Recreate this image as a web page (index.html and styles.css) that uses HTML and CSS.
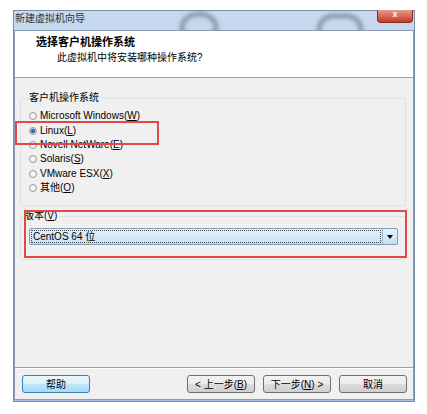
FILE: index.html
```html
<!DOCTYPE html>
<html lang="zh-CN">
<head>
  <meta charset="UTF-8" />
  <title>新建虚拟机向导</title>
  <link rel="stylesheet" href="styles.css">
</head>
<body>
  <div class="window">
    <div class="titlebar">
      <span class="title">新建虚拟机向导</span>
      <span class="blob blob-a"></span>
      <span class="blob blob-b"></span>
      <span class="close">x</span>
    </div>
    <div class="client">
      <div class="header">
        <div class="head-title">选择客户机操作系统</div>
        <div class="head-sub">此虚拟机中将安装哪种操作系统?</div>
      </div>

      <div class="body">
        <fieldset class="group">
          <legend>客户机操作系统</legend>
          <label class="radio"><span class="dot"></span>Microsoft Windows(<u>W</u>)</label>
          <label class="radio checked"><span class="dot"></span>Linux(<u>L</u>)</label>
          <label class="radio"><span class="dot"></span>Novell NetWare(<u>E</u>)</label>
          <label class="radio"><span class="dot"></span>Solaris(<u>S</u>)</label>
          <label class="radio"><span class="dot"></span>VMware ESX(<u>X</u>)</label>
          <label class="radio"><span class="dot"></span>其他(<u>O</u>)</label>
          <span class="mark mark-linux"></span>
        </fieldset>

        <fieldset class="group version">
          <legend>版本(<u>V</u>)</legend>
          <div class="combo">
            <span class="combo-text">CentOS 64 位</span>
            <span class="combo-arrow"></span>
          </div>
          <span class="mark mark-version"></span>
        </fieldset>
      </div>

      <div class="footer">
        <button class="btn default">帮助</button>
        <div class="nav">
          <button class="btn">&lt; 上一步(<u>B</u>)</button>
          <button class="btn">下一步(<u>N</u>) &gt;</button>
          <button class="btn">取消</button>
        </div>
      </div>
    </div>
  </div>
</body>
</html>
```

FILE: styles.css
```css
body {
  margin: 0;
  background: #fff;
  font-family: "Liberation Sans", "Noto Sans CJK SC", sans-serif;
  font-size: 10px;
  color: #000;
}

.window {
  margin: 10px 0 0 13px;
  width: 400px;
  background: linear-gradient(#c6d9ee, #a9c3e0);
  padding: 0 1px 2px 1px;
  box-shadow: inset 0 0 0 1px #7a8ea8;
}

.titlebar {
  position: relative;
  height: 20px;
  overflow: hidden;
}

.title {
  position: absolute;
  left: 1px;
  top: 3px;
  line-height: 12px;
  color: #333;
}

.blob {
  position: absolute;
  border: 4px solid #3e4c5c;
  border-radius: 50%;
  filter: blur(2px);
  opacity: 0.55;
}

.blob-a { left: 166px; top: 2px; width: 30px; height: 22px; }
.blob-b { left: 303px; top: 4px; width: 38px; height: 18px; border-radius: 16px 16px 7px 7px; }

.close {
  position: absolute;
  right: 1px;
  top: 0;
  width: 34px;
  height: 12px;
  border-radius: 0 0 4px 4px;
  background: linear-gradient(#e79a8e, #c63a24);
  border: 1px solid #8a2a1c;
  border-top: none;
  color: #fff;
  font-size: 9px;
  line-height: 9px;
  text-align: center;
  font-weight: bold;
}

.client {
  background: #f0f0f0;
  border: 1px solid #8c9bb0;
  height: 368px;
  display: flex;
  flex-direction: column;
}

.header {
  background: #fff;
  height: 47px;
  border-bottom: 1px solid #a0a0a0;
  padding: 4px 0 0 21px;
  box-sizing: border-box;
}

.head-title {
  font-weight: bold;
  font-size: 11px;
  line-height: 15px;
}

.head-sub {
  padding-left: 21px;
  line-height: 15px;
}

.body {
  flex: 1;
  padding: 13px 7px 0 5px;
  border-bottom: 1px solid #a0a0a0;
  box-shadow: 0 1px 0 #fff;
}

.group {
  position: relative;
  border: 1px solid #dde2e6;
  border-radius: 2px;
  margin: 0;
  padding: 4px 0 10px 8px;
  display: flex;
  flex-direction: column;
}

.group legend {
  padding: 0 2px 0 0;
  margin-left: 0;
  line-height: 14px;
}

.radio {
  display: flex;
  align-items: center;
  height: 14.4px;
  line-height: 14px;
  color: #000;
}

.dot {
  width: 8px;
  height: 8px;
  border: 1px solid #9c9c9c;
  border-radius: 50%;
  background: radial-gradient(#fff, #e4e4e4);
  margin-right: 3px;
  box-sizing: border-box;
}

.radio.checked .dot {
  background: radial-gradient(circle, #2a5a9a 0, #3d7ac0 2px, #fff 3px, #e4e4e4 4px);
}

.mark {
  position: absolute;
  border: 2px solid #e0484a;
  pointer-events: none;
}

.mark-linux {
  left: -6px;
  top: 16px;
  width: 140px;
  height: 20px;
}

.version {
  margin-top: 3px;
  padding: 2px 7px 14px 8px;
}

.version legend {
  margin-left: -5px;
}

.combo {
  margin-top: 3px;
  height: 15px;
  border: 1px solid #7f9db9;
  border-radius: 2px;
  background: linear-gradient(#e6f2fc, #c4e0f6);
  display: flex;
  align-items: center;
  position: relative;
}

.combo-text {
  flex: 1;
  height: 11px;
  line-height: 11px;
  margin: 0 1px;
  padding-left: 1px;
  border: 1px dotted #444;
}

.combo-arrow {
  width: 14px;
  height: 100%;
  border-left: 1px solid #9fb6cf;
  position: relative;
}

.combo-arrow::after {
  content: "";
  position: absolute;
  left: 4px;
  top: 6px;
  border: 3px solid transparent;
  border-top: 4px solid #000;
  border-bottom: none;
}

.mark-version {
  left: 3px;
  top: -13px;
  right: -2px;
  height: 44px;
}

.footer {
  height: 31px;
  display: flex;
  align-items: center;
  justify-content: space-between;
  padding: 0 6px 0 7px;
}

.btn {
  width: 68px;
  height: 18px;
  padding: 0;
  font-family: inherit;
  font-size: 10px;
  border: 1px solid #707070;
  border-radius: 3px;
  background: linear-gradient(#f2f2f2 0, #ebebeb 50%, #dddddd 51%, #cfcfcf);
  color: #000;
}

.btn.default {
  border-color: #3c7fb1;
  background: linear-gradient(#eaf6fd 0, #d9f0fc 50%, #bee6fd 51%, #a7d9f5);
}

.nav {
  display: flex;
  gap: 8px;
}
```
